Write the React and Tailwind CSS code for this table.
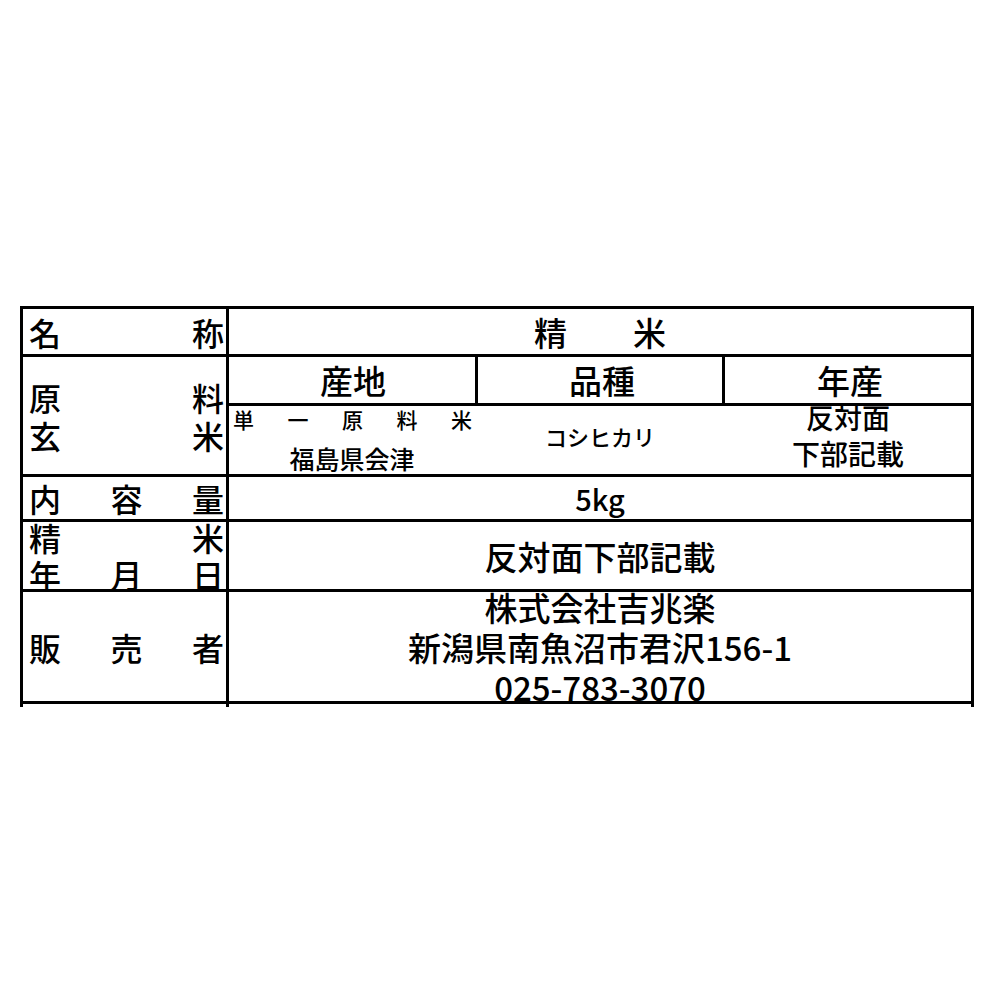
export default function App() {
  const J = ({ chars }) => (
    <div className="flex w-full justify-between">
      {chars.map((c, i) => (
        <span key={i}>{c}</span>
      ))}
    </div>
  );

  return (
    <div className="min-h-[1000px] w-[1000px] bg-white pt-[306px] pl-[20px] text-black font-[family-name:'Noto_Sans_CJK_JP','Noto_Sans',sans-serif] font-medium">
      <div className="w-[954px] border-[3px] border-black">
        {/* 名称 */}
        <div className="flex h-[48px] border-b-[3px] border-black">
          <div className="flex w-[203px] items-center pl-[6px] pr-[2px] text-[32px] leading-[38px]">
            <J chars={["名", "称"]} />
          </div>
          <div className="flex flex-1 items-center justify-center whitespace-pre border-l-[3px] border-black text-[33px] leading-[40px]">
            精　　米
          </div>
        </div>

        {/* 原料玄米 */}
        <div className="flex h-[120px] border-b-[3px] border-black">
          <div className="flex w-[203px] flex-col justify-center pl-[6px] pr-[2px] text-[32px] leading-[38px]">
            <J chars={["原", "料"]} />
            <J chars={["玄", "米"]} />
          </div>
          <div className="flex flex-1 flex-col border-l-[3px] border-black">
            <div className="flex h-[49px] border-b-[3px] border-black text-[33px] leading-[40px]">
              <div className="flex w-[246px] items-center justify-center pl-[2px]">産地</div>
              <div className="flex w-[247px] items-center justify-center border-l-[3px] border-black pl-[4px]">品種</div>
              <div className="flex flex-1 items-center justify-center border-l-[3px] border-black pl-[4px]">年産</div>
            </div>
            <div className="flex h-[68px]">
              <div className="flex w-[246px] flex-col">
                <div className="flex justify-between pl-[4px] pr-[3px] text-[21px] leading-[26px]">
                  <span>単</span>
                  <span>一</span>
                  <span>原</span>
                  <span>料</span>
                  <span>米</span>
                </div>
                <div className="mt-[10px] text-center text-[25px] leading-[32px]">福島県会津</div>
              </div>
              <div className="flex w-[247px] items-center justify-center pl-[3px] pb-[8px] text-[22px] leading-[28px]">
                コシヒカリ
              </div>
              <div className="flex flex-1 flex-col items-center justify-center pl-[3px] pb-[10px] text-[28px] leading-[36px]">
                <div>反対面</div>
                <div>下部記載</div>
              </div>
            </div>
          </div>
        </div>

        {/* 内容量 */}
        <div className="flex h-[45px] border-b-[3px] border-black">
          <div className="flex w-[203px] items-center pl-[6px] pr-[2px] text-[32px] leading-[38px]">
            <J chars={["内", "容", "量"]} />
          </div>
          <div className="flex flex-1 items-center justify-center border-l-[3px] border-black text-[29px] leading-[36px]">
            5kg
          </div>
        </div>

        {/* 精米年月日 */}
        <div className="flex h-[70px] border-b-[3px] border-black">
          <div className="flex w-[203px] flex-col justify-center pl-[6px] pr-[2px] text-[32px] leading-[37px]">
            <J chars={["精", "米"]} />
            <J chars={["年", "月", "日"]} />
          </div>
          <div className="flex flex-1 items-center justify-center border-l-[3px] border-black text-[33px] leading-[40px]">
            反対面下部記載
          </div>
        </div>

        {/* 販売者 */}
        <div className="flex h-[109px]">
          <div className="flex w-[203px] items-center pl-[6px] pr-[2px] text-[32px] leading-[38px]">
            <J chars={["販", "売", "者"]} />
          </div>
          <div className="flex flex-1 flex-col items-center justify-center border-l-[3px] border-black text-[33px] leading-[40px]">
            <div>株式会社吉兆楽</div>
            <div>新潟県南魚沼市君沢156-1</div>
            <div>025-783-3070</div>
          </div>
        </div>
      </div>
      {/* line stubs below table */}
      <div className="flex h-[3px] w-[954px]">
        <div className="w-[3px] bg-black" />
        <div className="w-[203px]" />
        <div className="w-[3px] bg-black" />
        <div className="flex-1" />
        <div className="w-[3px] bg-black" />
      </div>
    </div>
  );
}
